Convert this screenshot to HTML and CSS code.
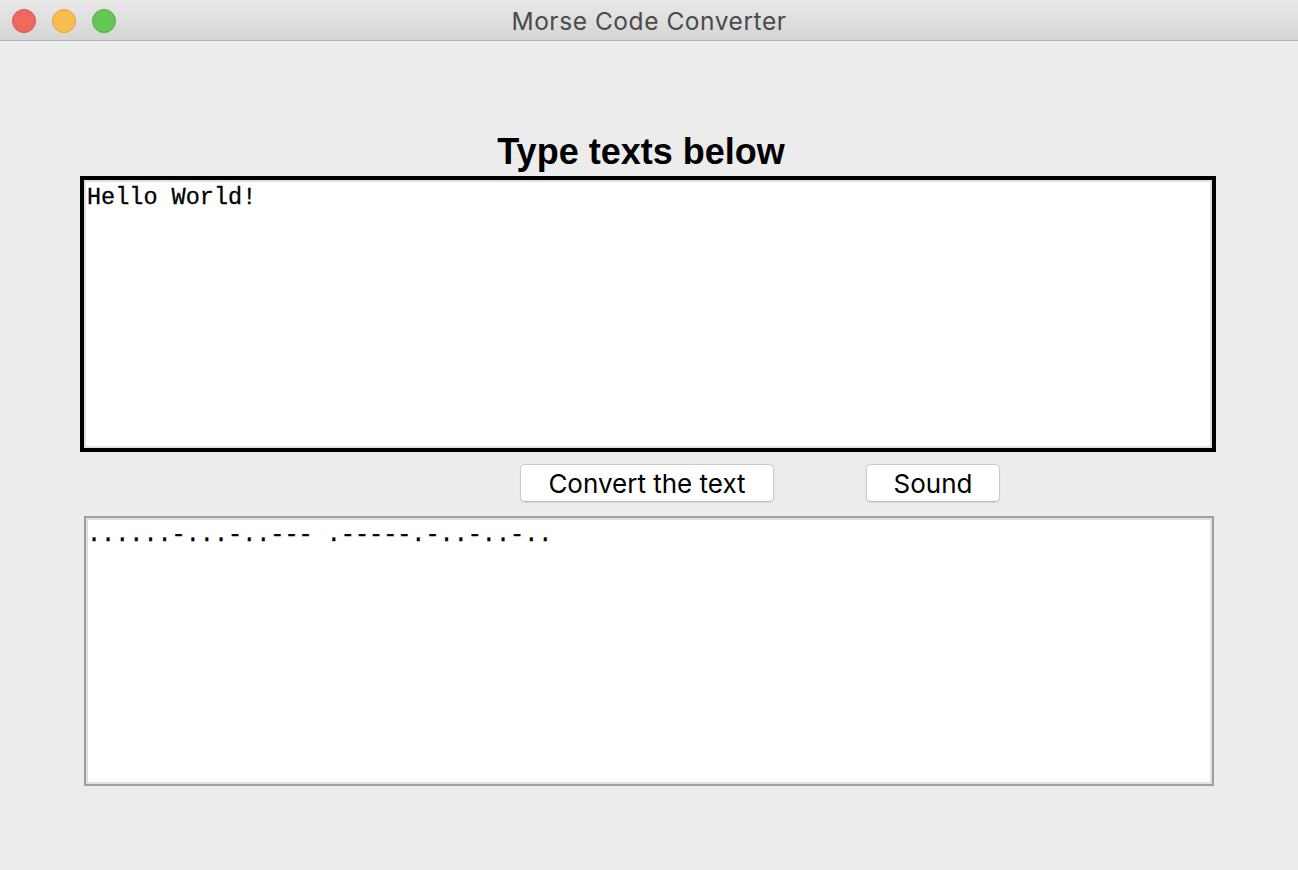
FILE: index.html
```html
<!DOCTYPE html>
<html lang="en">
<head>
<meta charset="utf-8">
<title>Morse Code Converter</title>
<link rel="stylesheet" href="styles.css">
</head>
<body>
<div class="window">
  <header class="titlebar">
    <div class="lights">
      <span class="light red"></span>
      <span class="light yellow"></span>
      <span class="light green"></span>
    </div>
    <div class="title">Morse Code Converter</div>
    <div class="spacer"></div>
  </header>
  <main class="content">
    <h1 class="heading">Type texts below</h1>
    <textarea class="box input" spellcheck="false">Hello World!</textarea>
    <div class="actions">
      <button class="btn btn-convert" type="button">Convert the text</button>
      <button class="btn btn-sound" type="button">Sound</button>
    </div>
    <textarea class="box output" spellcheck="false" readonly>......-...-..--- .-----.-..-..-..</textarea>
  </main>
</div>
</body>
</html>
```
FILE: styles.css
```css
* { box-sizing: border-box; }
html, body { margin: 0; padding: 0; }
body {
  width: 1298px;
  height: 870px;
  background: #ececec;
  overflow: hidden;
  font-family: "Liberation Sans", Arial, sans-serif;
}
.window { width: 1298px; height: 870px; background: #ececec; }

.titlebar {
  height: 41px;
  background: linear-gradient(#e9e9e9, #d5d5d5);
  border-bottom: 1px solid #b3b3b3;
  display: grid;
  grid-template-columns: 1fr auto 1fr;
  align-items: center;
}
.lights { display: flex; gap: 16px; padding-left: 12px; }
.light {
  width: 24px; height: 24px; border-radius: 50%;
  display: block;
}
.red { background: #ee6a5e; border: 1px solid #d5554a; }
.yellow { background: #f6be4f; border: 1px solid #dba342; }
.green { background: #62c554; border: 1px solid #55ac45; }
.title {
  font-family: Inter, "Liberation Sans", sans-serif;
  font-size: 24.5px;
  letter-spacing: 0.55px;
  color: #4a4a4a;
  line-height: 42px;
}

.content { display: flex; flex-direction: column; padding-top: 91px; }
.heading {
  margin: 0 82px 4px 80px;
  padding-right: 14px;
  height: 40px;
  line-height: 40px;
  font-size: 36px;
  font-weight: bold;
  text-align: center;
  color: #000;
}
.box {
  display: block;
  resize: none;
  outline: none;
  background: #fff;
  margin: 0;
  font-family: "Liberation Mono", "Courier New", monospace;
  font-size: 23.5px;
  line-height: 26px;
  color: #000;
  -webkit-text-stroke: 0.3px #000;
  overflow: hidden;
}
.input {
  margin-left: 80px;
  width: 1136px;
  height: 276px;
  border: 4px solid #000;
  box-shadow: inset 0 0 0 2px #e2e2e2;
  padding: 5px 3px;
}
.actions {
  display: flex;
  gap: 92px;
  margin-top: 12px;
  padding-left: 520px;
  height: 38px;
}
.btn {
  height: 38px;
  background: #fff;
  border: 1px solid #c9c9c9;
  border-bottom-color: #b9b9b9;
  border-radius: 5px;
  box-shadow: 0 1px 1px rgba(0,0,0,0.08);
  font-family: Inter, "Liberation Sans", sans-serif;
  font-size: 26px;
  color: #000;
  padding: 0;
}
.btn-convert { width: 254px; }
.btn-sound { width: 134px; }
.output {
  margin-top: 14px;
  margin-left: 84px;
  width: 1130px;
  height: 270px;
  border: 2px solid #9f9f9f;
  box-shadow: inset 0 0 0 2px #e0e0e0;
  padding: 4px 1px;
}
```
